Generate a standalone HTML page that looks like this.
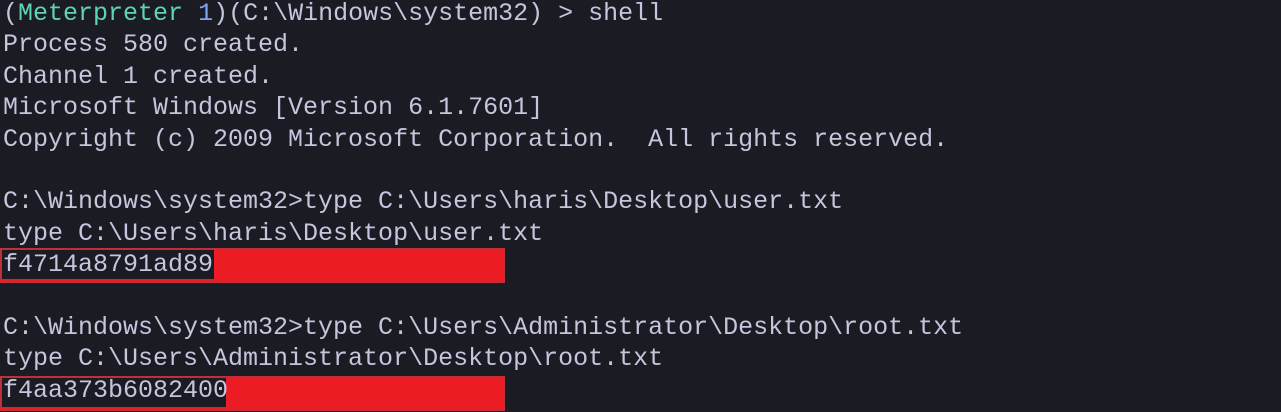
<!DOCTYPE html>
<html><head><meta charset="utf-8"><style>
html,body{margin:0;padding:0;background:#1b1b23;width:1281px;height:412px;overflow:hidden}
pre{margin:0;position:absolute;left:3px;top:-2px;font-family:"Liberation Mono","DejaVu Sans Mono",monospace;font-size:25px;line-height:31.4px;color:#c3c6dc;letter-spacing:0}
.g{color:#5fd4b4}.b{color:#7aa6f2}
.r{position:absolute;background:#ec1c24;border:1px solid #c0303a}
.d{position:absolute;background:#1b1b23}
</style></head><body>
<div class="r" style="left:0;top:248px;width:503px;height:33px"></div>
<div class="d" style="left:2px;top:250px;width:212px;height:29px"></div>
<div class="r" style="left:0;top:376px;width:503px;height:33px"></div>
<div class="d" style="left:2px;top:378px;width:224px;height:29px"></div>
<pre>(<span class="g">Meterpreter</span> <span class="b">1</span>)(C:\Windows\system32) &gt; shell
Process 580 created.
Channel 1 created.
Microsoft Windows [Version 6.1.7601]
Copyright (c) 2009 Microsoft Corporation.  All rights reserved.

C:\Windows\system32&gt;type C:\Users\haris\Desktop\user.txt
type C:\Users\haris\Desktop\user.txt
f4714a8791ad89

C:\Windows\system32&gt;type C:\Users\Administrator\Desktop\root.txt
type C:\Users\Administrator\Desktop\root.txt
f4aa373b6082400</pre>
</body></html>
